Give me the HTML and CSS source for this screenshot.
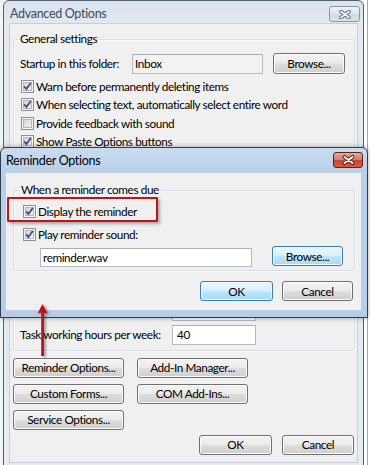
FILE: index.html
```html
<!DOCTYPE html>
<html>
<head>
<meta charset="utf-8">
<title>Advanced Options</title>
<link rel="stylesheet" href="styles.css">
</head>
<body>
<svg class="defs" width="0" height="0" aria-hidden="true">
  <defs>
    <linearGradient id="cbg" x1="0" y1="0" x2="1" y2="1">
      <stop offset="0" stop-color="#cdd1d7"/>
      <stop offset="1" stop-color="#f7f7f7"/>
    </linearGradient>
    <symbol id="cb-box" viewBox="0 0 13 13">
      <rect x="0.5" y="0.5" width="12" height="12" fill="#f6f6f6" stroke="#8e8f8f"/>
      <rect x="2.5" y="2.5" width="8" height="8" fill="url(#cbg)" stroke="#b3b7bd"/>
    </symbol>
    <symbol id="cb-on" viewBox="0 0 13 13">
      <use href="#cb-box"/>
      <path d="M3.2 6.4 L5.4 9 L9.8 3" fill="none" stroke="#3a4f8c" stroke-width="1.8"/>
    </symbol>
  </defs>
</svg>

<div class="desk">
  <div class="bg-left"></div>

  <div class="win adv">
    <div class="titlebar">
      <span class="title title-off">Advanced Options</span>
      <span class="close close-off">
        <svg width="12" height="9" viewBox="0 0 12 9"><path d="M2 1.5 L10 7.5 M10 1.5 L2 7.5" stroke="#5d6874" stroke-width="3.6" stroke-linecap="round"/><path d="M2 1.5 L10 7.5 M10 1.5 L2 7.5" stroke="#f2f4f6" stroke-width="1.8" stroke-linecap="round"/></svg>
      </span>
    </div>
    <div class="client adv-client">
      <fieldset class="group gen">
        <legend>General settings</legend>
        <div class="field-row">
          <span class="lbl lbl-folder">Startup in this folder:</span>
          <span class="input input-ro input-folder">Inbox</span>
          <button class="btn btn-browse">Browse...</button>
        </div>
        <div class="checks">
          <div class="check"><svg class="cb"><use href="#cb-on"/></svg><span>Warn before permanently deleting items</span></div>
          <div class="check"><svg class="cb"><use href="#cb-on"/></svg><span>When selecting text, automatically select entire word</span></div>
          <div class="check"><svg class="cb"><use href="#cb-box"/></svg><span>Provide feedback with sound</span></div>
          <div class="check"><svg class="cb"><use href="#cb-on"/></svg><span>Show Paste Options buttons</span></div>
        </div>
      </fieldset>

      <fieldset class="group appear">
        <div class="field-row hours">
          <span class="lbl lbl-hours">Task working hours per day:</span>
          <span class="input input-hours">8</span>
        </div>
        <div class="field-row hours">
          <span class="lbl lbl-hours">Task working hours per week:</span>
          <span class="input input-hours">40</span>
        </div>
      </fieldset>

      <div class="btn-grid">
        <button class="btn">Reminder Options...</button>
        <button class="btn">Add-In Manager...</button>
        <button class="btn">Custom Forms...</button>
        <button class="btn">COM Add-Ins...</button>
        <button class="btn">Service Options...</button>
      </div>

      <div class="footer adv-footer">
        <button class="btn btn-ok">OK</button>
        <button class="btn btn-cancel">Cancel</button>
      </div>
    </div>
  </div>

  <div class="bg-right"></div>

  <div class="win dlg">
    <div class="titlebar dlg-titlebar">
      <span class="title">Reminder Options</span>
      <span class="close close-on">
        <svg width="13" height="10" viewBox="0 0 13 10"><path d="M2.5 2 L10.5 8 M10.5 2 L2.5 8" stroke="#4a1a12" stroke-width="3.8" stroke-linecap="round"/><path d="M2.5 2 L10.5 8 M10.5 2 L2.5 8" stroke="#ffffff" stroke-width="2" stroke-linecap="round"/></svg>
      </span>
    </div>
    <div class="client dlg-client">
      <fieldset class="group due">
        <legend>When a reminder comes due</legend>
        <div class="check check-dlg"><svg class="cb"><use href="#cb-on"/></svg><span>Display the reminder</span></div>
        <div class="check check-dlg check-play"><svg class="cb"><use href="#cb-on"/></svg><span>Play reminder sound:</span></div>
        <div class="file-row">
          <span class="input input-file">reminder.wav</span>
          <button class="btn btn-blue btn-browse2">Browse...</button>
        </div>
      </fieldset>
      <div class="footer dlg-footer">
        <button class="btn btn-blue btn-ok">OK</button>
        <button class="btn btn-cancel2">Cancel</button>
      </div>
    </div>
  </div>

  <div class="highlight"></div>

  <svg class="arrow" width="20" height="62" viewBox="0 0 20 62">
    <path d="M8.5 4 L3.5 13.5 L7.2 12.8 L7.2 56 L10 56 L10 12.8 L13.5 13.5 Z" fill="#b8141c"/>
  </svg>
</div>
</body>
</html>
```

FILE: styles.css
```css
* { box-sizing: border-box; }

html, body {
  margin: 0;
  padding: 0;
}

body {
  width: 370px;
  height: 465px;
  overflow: hidden;
  background: #ffffff;
  font-family: "Segoe UI", Lato, "Open Sans", sans-serif;
  font-size: 11.75px;
  letter-spacing: -0.4px;
  color: #000;
}

.defs {
  position: absolute;
  width: 0;
  height: 0;
}

.desk {
  position: relative;
  display: flex;
  align-items: flex-start;
  width: 370px;
  height: 465px;
  overflow: hidden;
}

.bg-left {
  flex: none;
  width: 3px;
  height: 465px;
  background: #f4f4f4;
}

.bg-right {
  flex: 1;
  height: 465px;
  background: linear-gradient(to right, #ffffff 3px, #a8a8a8 3px, #a8a8a8 4px, #ffffff 4px);
}

/* ---------- windows ---------- */
.win {
  border: 1px solid #56606c;
  border-radius: 6px 6px 0 0;
}

.adv {
  flex: none;
  width: 361px;
  background: linear-gradient(#d9e3ee, #e3eaf2 30px, #e6ecf3);
  padding: 0 5px 5px 5px;
}

.titlebar {
  display: flex;
  align-items: flex-start;
  justify-content: space-between;
  height: 22px;
}

.title {
  margin-top: 5px;
  padding-left: 1px;
  line-height: 16px;
  font-size: 12.5px;
  letter-spacing: -0.3px;
  white-space: nowrap;
}

.title-off {
  color: #3f4b58;
}

.close {
  display: flex;
  align-items: center;
  justify-content: center;
  margin-top: 5px;
  width: 31px;
  height: 16px;
  border-radius: 3px;
}

.close-off {
  margin-right: -2px;
  border: 1px solid #8b96a3;
  background: linear-gradient(#eef2f6, #dde4eb 50%, #cfd8e1 50%, #dbe3ea);
}

.client {
  background: #f0f0f0;
  border: 1px solid #c5cfda;
}

.adv-client {
  padding: 0 2px 7px 3px;
}

/* ---------- group boxes ---------- */
.group {
  margin: 0;
  min-width: 0;
  border: 1px solid #d5dce3;
  border-radius: 3px;
  box-shadow: inset 1px 1px 0 #fafafa, 1px 1px 0 #fafafa;
}

.group legend {
  padding: 0 2px;
  margin-left: -2px;
  line-height: 16px;
}

.gen {
  margin-top: 7px;
  padding: 6px 9px 50px 6px;
}

.appear {
  margin-top: 7px;
  padding: 91px 9px 5px 6px;
}

.field-row {
  display: flex;
  align-items: center;
  height: 21px;
  white-space: nowrap;
}

.lbl-folder { width: 112px; }
.lbl-hours { width: 152px; }

.input {
  display: flex;
  align-items: center;
  height: 20px;
  padding-left: 3px;
  background: #ffffff;
  border: 1px solid #b6bac2;
  border-top-color: #abadb3;
  white-space: nowrap;
}

.input-ro {
  background: #f2f2f2;
}

.input-folder {
  width: 131px;
  padding-left: 2px;
}

.input-hours {
  width: 84px;
  padding-left: 4px;
}

.hours {
  height: 20px;
}

.hours + .hours {
  margin-top: 3.5px;
}

.checks {
  margin-top: 3px;
}

.check {
  display: flex;
  align-items: center;
  height: 18.5px;
  white-space: nowrap;
}

.cb {
  flex: none;
  width: 13px;
  height: 13px;
  margin-left: 1px;
  margin-right: 2px;
}

/* ---------- buttons ---------- */
.btn {
  display: flex;
  align-items: center;
  justify-content: center;
  height: 20px;
  padding: 0;
  font-family: inherit;
  font-size: inherit;
  letter-spacing: inherit;
  color: #000;
  border: 1px solid #707070;
  border-radius: 3px;
  background: linear-gradient(#f3f3f3, #ebebeb 48%, #dddddd 52%, #cfcfcf);
  box-shadow: inset 0 0 0 1px #fbfbfb;
  white-space: nowrap;
}

.btn-blue {
  border-color: #3c7fb1;
  background: linear-gradient(#eaf6fd, #d9f0fc 48%, #bee6fd 52%, #a7d9f5);
  box-shadow: inset 0 0 0 1px #f4fbff;
}

.btn-browse {
  width: 72px;
  height: 21px;
  margin-left: 10px;
}

.btn-grid {
  display: grid;
  grid-template-columns: 111px 111px;
  column-gap: 13px;
  row-gap: 6px;
  margin-top: 7px;
}

.footer {
  display: flex;
  justify-content: flex-end;
}

.adv-footer {
  margin-top: 5px;
  margin-right: 1px;
  gap: 10px;
}

.btn-ok { width: 73px; }
.btn-cancel { width: 72px; }
.btn-cancel2 { width: 71px; }

/* ---------- reminder dialog ---------- */
.dlg {
  position: absolute;
  left: 0;
  top: 147px;
  width: 368px;
  height: 171px;
  display: flex;
  flex-direction: column;
  padding: 0 5px 6px 4px;
  border-color: #2e3d4d;
  background: linear-gradient(#c9dcf1, #b9d0ea 24px, #b4cde9);
  box-shadow: 0 0 5px rgba(0, 0, 0, 0.35);
}

.dlg-titlebar {
  height: 24px;
}

.close-on {
  margin-top: 4px;
  margin-right: -1px;
  width: 30px;
  border: 1px solid #5e2418;
  background: linear-gradient(#e9a99b, #d77d6a 48%, #c7452f 52%, #d25c44);
}

.dlg-client {
  flex: 1;
  padding: 0 6px 0 7px;
}

.due {
  margin-top: 9px;
  padding: 4px 8px 3px 8px;
}

.due legend {
  margin-left: -3px;
}

.check-dlg {
  height: 18px;
}

.check-play {
  margin-top: 5px;
}

.file-row {
  display: flex;
  align-items: flex-start;
  margin-top: 3px;
  padding-left: 18px;
  height: 21px;
}

.input-file {
  width: 212px;
  height: 19px;
  margin-top: 2px;
  padding-left: 2px;
}

.btn-browse2 {
  width: 71px;
  margin-left: 20px;
}

.dlg-footer {
  margin-top: 10px;
  margin-right: 2px;
  gap: 9px;
}

/* ---------- annotations ---------- */
.highlight {
  position: absolute;
  left: 7px;
  top: 197px;
  width: 151px;
  height: 25px;
  border: 2px solid #c0141c;
  border-radius: 1px;
  box-shadow: 2px 2px 3px rgba(0, 0, 0, 0.3);
}

.arrow {
  position: absolute;
  left: 34px;
  top: 300px;
  filter: drop-shadow(2px 1px 1px rgba(0, 0, 0, 0.35));
}
```
